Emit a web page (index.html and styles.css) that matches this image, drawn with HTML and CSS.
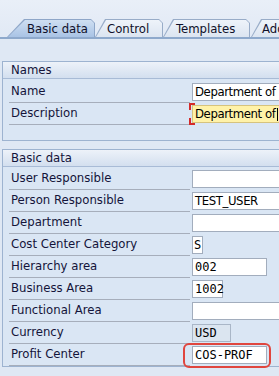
FILE: index.html
```html
<!DOCTYPE html>
<html>
<head>
<meta charset="utf-8">
<link rel="stylesheet" href="styles.css">
</head>
<body>
<div class="tabstrip">
  <div class="tab active"><span class="tab-in">Basic data</span></div>
  <div class="tab t-control"><span class="tab-in">Control</span></div>
  <div class="tab t-templates"><span class="tab-in">Templates</span></div>
  <div class="tab t-add"><span class="tab-in">Additional Fields</span></div>
</div>
<div class="content">
  <section class="group g-names">
    <div class="group-head">Names</div>
    <div class="rows">
      <div class="row"><div class="lbl">Name</div><div class="fld wide sans">Department of Finance</div></div>
      <div class="row"><div class="lbl">Description</div><div class="fld wide sans req">Department of<i class="caret"></i></div></div>
    </div>
  </section>
  <section class="group g-basic">
    <div class="group-head">Basic data</div>
    <div class="rows">
      <div class="row"><div class="lbl">User Responsible</div><div class="fld wide"></div></div>
      <div class="row"><div class="lbl">Person Responsible</div><div class="fld wide sans">TEST_USER</div></div>
      <div class="row"><div class="lbl">Department</div><div class="fld wide"></div></div>
      <div class="row"><div class="lbl">Cost Center Category</div><div class="fld mono w1">S</div></div>
      <div class="row"><div class="lbl">Hierarchy area</div><div class="fld mono w10">002</div></div>
      <div class="row"><div class="lbl">Business Area</div><div class="fld mono w4">1002</div></div>
      <div class="row"><div class="lbl">Functional Area</div><div class="fld wide"></div></div>
      <div class="row"><div class="lbl">Currency</div><div class="fld mono w5 ro">USD</div></div>
      <div class="row"><div class="lbl">Profit Center</div><div class="fld mono w10 hl">COS-PROF</div></div>
    </div>
  </section>
</div>
</body>
</html>
```
FILE: styles.css
```css
html, body {
  margin: 0;
  padding: 0;
}
body {
  width: 279px;
  height: 376px;
  overflow: hidden;
  background: #dfe8f4;
  font-family: "DejaVu Sans Condensed", "Liberation Sans", sans-serif;
  font-size: 12px;
  color: #14143a;
}
.tabstrip {
  display: flex;
  padding: 19px 0 0 7px;
  height: 18px;
  border-bottom: 2px solid #8ea9cc;
  background: linear-gradient(#e9eff8, #e1e9f5);
  white-space: nowrap;
}
.tab {
  --s: 10px;
  flex: none;
  height: 18px;
  background: #98acc8;
  clip-path: polygon(var(--s) 0, calc(100% - 4px) 0, 100% 4px, 100% 100%, 0 100%);
  padding: 1px 1px 0 1px;
  box-sizing: border-box;
}
.tab-in {
  display: block;
  height: 17px;
  line-height: 17px;
  box-sizing: border-box;
  background: linear-gradient(#eef3fa, #dce5f1);
  clip-path: polygon(var(--s) 0, calc(100% - 3px) 0, 100% 3px, 100% 100%, 0 100%);
  font-size: 13px;
  color: #10102a;
}
.tab.active {
  --s: 17px;
  width: 88px;
  background: #8ea6c8;
}
.tab.active .tab-in {
  background: linear-gradient(#cfdff2, #a9c3e5);
  padding-left: 19px;
}
.t-control { width: 68px; }
.t-control .tab-in { padding-left: 11px; }
.t-templates { width: 87px; }
.t-templates .tab-in { padding-left: 12px; }
.t-add { width: 120px; margin-left: 1px; }
.t-add .tab-in { padding-left: 10px; }

.content {
  padding: 22px 0 0 2px;
}
.group {
  border: 1px solid #9db3d0;
  border-right: none;
  background: #dae6f4;
  width: 300px;
}
.g-names {
  height: 78px;
}
.g-basic {
  margin-top: 8px;
}
.group-head {
  height: 16px;
  line-height: 16px;
  padding-left: 8px;
  border-bottom: 1px solid #a8bbd6;
  background: linear-gradient(#edf2f9, #d3dfef);
  font-size: 13px;
}
.rows {
  padding: 2px 0 0 6px;
}
.g-basic .rows {
  padding-top: 1px;
}
.row {
  display: flex;
  height: 22px;
  align-items: flex-start;
}
.lbl {
  width: 179px;
  height: 21px;
  line-height: 20px;
  padding-left: 2px;
  border-bottom: 1px solid #a6aebb;
  font-size: 13px;
  flex: none;
}
.fld {
  position: relative;
  flex: none;
  margin: 2px 0 0 2px;
  height: 18px;
  box-sizing: border-box;
  border: 1px solid #a2adbd;
  background: #fff;
  line-height: 16px;
  padding-left: 2px;
  color: #000;
  white-space: nowrap;
  overflow: visible;
}
.sans {
  font-family: "DejaVu Sans Condensed", "Liberation Sans", sans-serif;
  font-size: 13px;
  letter-spacing: -0.4px;
}
.mono {
  font-family: "DejaVu Sans Mono", monospace;
  font-size: 12px;
}
.wide { width: 110px; }
.w1 { width: 11px; padding-left: 1px; }
.w10 { width: 75px; }
.w4 { width: 31px; }
.w5 { width: 39px; }
.ro {
  background: #dbe5f0;
  border-color: #a9b6c7;
}
.req {
  background: #fff2a8;
  border-color: #d6c37e;
}
.req::before,
.req::after {
  content: "";
  position: absolute;
  left: -4px;
  width: 4px;
  height: 5px;
  border-left: 2px solid #d42a2a;
}
.req::before {
  top: -3px;
  border-top: 2px solid #d42a2a;
}
.req::after {
  bottom: -3px;
  border-bottom: 2px solid #d42a2a;
}
.caret {
  display: inline-block;
  vertical-align: middle;
  margin-left: 1px;
  width: 1px;
  height: 13px;
  background: #000;
}
.hl::after {
  content: "";
  position: absolute;
  top: -4px;
  bottom: -5px;
  left: -10px;
  right: -5px;
  border: 2px solid #e0463e;
  border-radius: 6px;
}
```
